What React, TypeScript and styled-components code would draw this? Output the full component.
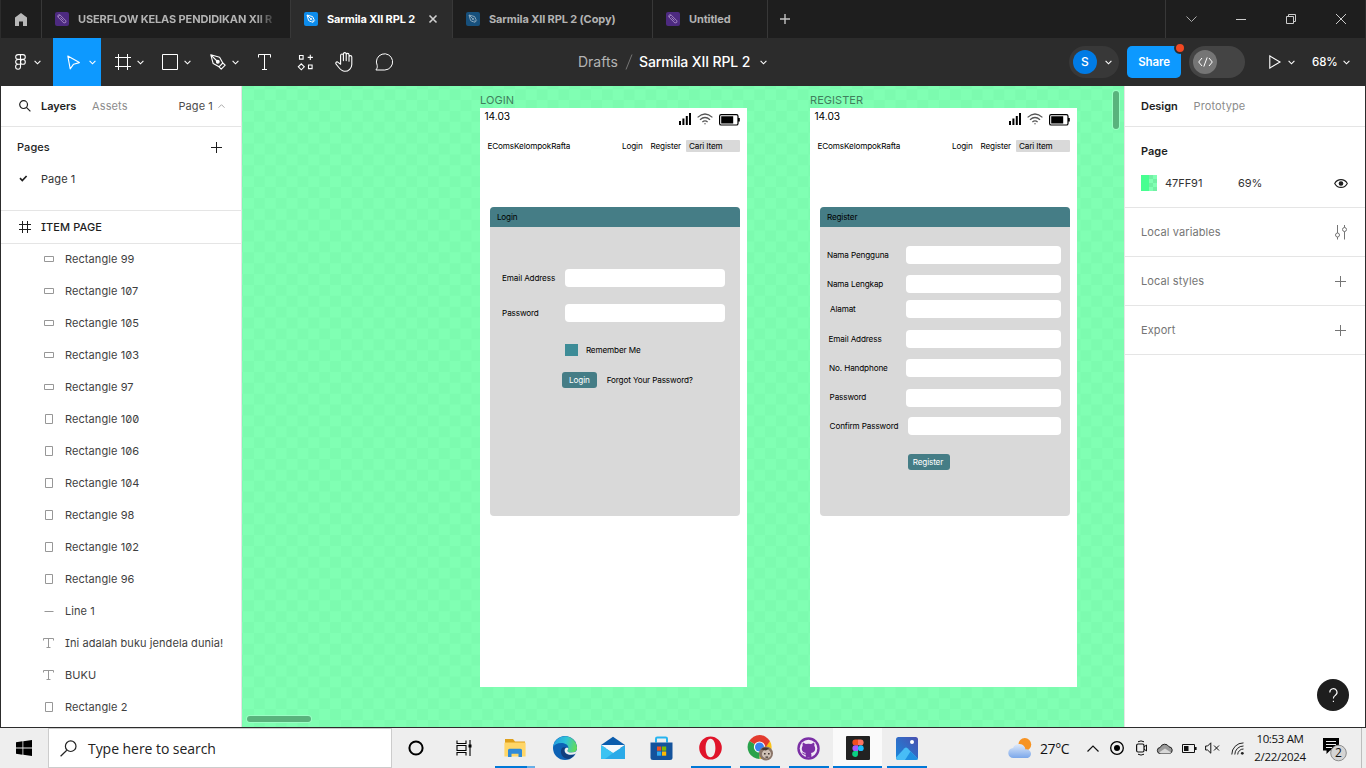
import React from 'react';
import styled, { createGlobalStyle } from 'styled-components';

const Global = createGlobalStyle`
  * { box-sizing: border-box; }
  html, body { margin: 0; padding: 0; overflow: hidden; }
  body { font-family: Inter, "Liberation Sans", sans-serif; font-size: 11px; color: #333; }
  svg { display: block; flex: none; overflow: visible; }
`;

const Screen = styled.div`
  width: 1366px; height: 768px; display: flex; flex-direction: column; overflow: hidden; background: #fff;
`;
const Window = styled.div`
  height: 728px; display: flex; flex-direction: column; border: 1px solid #2c2c2c; border-top: 0;
`;

/* ---------- tab bar ---------- */
const TabBar = styled.div`
  height: 38px; flex: none; display: flex; background: #1e1e1e;
`;
const HomeTab = styled.div`
  width: 41px; display: flex; align-items: center; justify-content: center; border-right: 1px solid #383838;
`;
const Tab = styled.div<{ $w: number; $active?: boolean }>`
  width: ${p => p.$w}px; height: 38px; display: flex; align-items: center; padding-left: 13px; gap: 9px;
  border-right: 1px solid #383838; background: ${p => (p.$active ? '#2c2c2c' : '#1e1e1e')};
  color: ${p => (p.$active ? '#fff' : '#b3b3b3')};
`;
const TabIcon = styled.span<{ $bg: string }>`
  width: 14px; height: 14px; border-radius: 2px; background: ${p => p.$bg}; flex: none;
  display: flex; align-items: center; justify-content: center;
`;
const TabTitle = styled.span<{ $w: number; $fade?: boolean }>`
  width: ${p => p.$w}px; flex: none; white-space: nowrap; font-size: 11px; font-weight: 700; line-height: 16px; letter-spacing: -0.12px;
  ${p => p.$fade && 'mask-image: linear-gradient(90deg, #000 91%, rgba(0,0,0,.15) 100%);'}
`;
const NewTab = styled.div`
  width: 34px; display: flex; align-items: center; justify-content: center;
`;
const WindowControls = styled.div`
  margin-left: auto; width: 200px; border-left: 1px solid #383838; display: flex; align-items: center;
`;
const WindowControl = styled.div`
  width: 50px; flex: none; display: flex; justify-content: center;
`;

/* ---------- toolbar ---------- */
const Toolbar = styled.div`
  height: 48px; flex: none; display: flex; align-items: center; background: #2c2c2c; color: #fff;
`;
const Tools = styled.div`
  width: 577px; height: 48px; display: flex;
`;
const Tool = styled.div<{ $w: number; $active?: boolean; $pad?: number; $gap?: number }>`
  width: ${p => p.$w}px; height: 48px; padding-left: ${p => p.$pad ?? 0}px; display: flex; align-items: center; gap: ${p => p.$gap ?? 0}px;
  background: ${p => (p.$active ? '#0d99ff' : 'transparent')};
`;
const DocTitle = styled.div`
  display: flex; align-items: center; font-size: 14px; line-height: 20px; white-space: nowrap;
`;
const Folder = styled.span`
  width: 45px; color: #b3b3b3;
`;
const Slash = styled.span`
  width: 16px; padding-left: 2px;
`;
const DocName = styled.span`
  width: 121px; font-weight: 500; letter-spacing: -0.12px;
`;
const Actions = styled.div`
  margin-left: auto; height: 48px; display: flex; align-items: center;
`;
const UserPill = styled.div`
  width: 50px; height: 32px; border-radius: 16px; background: #383838; display: flex; align-items: center; padding-left: 4px; gap: 8px;
`;
const Avatar = styled.div`
  width: 24px; height: 24px; border-radius: 12px; background: #007be5; font-size: 12px; line-height: 24px; font-weight: 500; text-align: center;
`;
const ShareButton = styled.div`
  position: relative; width: 54px; height: 32px; margin-left: 8px; border-radius: 5px; background: #0d99ff;
  font-size: 11.5px; font-weight: 600; line-height: 32px; text-align: center; letter-spacing: -0.1px;
`;
const NoticeDot = styled.span`
  position: absolute; right: -5px; top: -4px; width: 12px; height: 12px; border-radius: 6px; background: #f24822; border: 2px solid #2c2c2c;
`;
const DevToggle = styled.div`
  width: 56px; height: 32px; border-radius: 16px; background: #444; margin-left: 8px; padding: 4px;
`;
const DevKnob = styled.div`
  width: 24px; height: 24px; border-radius: 12px; background: #757575; display: flex; align-items: center; justify-content: center;
`;
const Present = styled.div`
  margin-left: 24px; width: 43px; display: flex; align-items: center; gap: 7px;
`;
const Zoom = styled.div`
  width: 53px; display: flex; align-items: center; gap: 5px; font-size: 11.5px; font-weight: 500; letter-spacing: -0.1px;
`;

/* ---------- body ---------- */
const Body = styled.div`
  height: 641px; display: flex; overflow: hidden;
`;
const LeftPanel = styled.div`
  width: 241px; flex: none; background: #fff; border-right: 1px solid #e5e5e5; overflow: hidden; letter-spacing: 0.08px;
  font-feature-settings: "zero", "cv08";
`;
const PanelTabs = styled.div`
  height: 41px; display: flex; align-items: center; border-bottom: 1px solid #e5e5e5;
`;
const PanelTab = styled.span<{ $w: number; $active?: boolean }>`
  width: ${p => p.$w}px; white-space: nowrap; font-weight: ${p => (p.$active ? 600 : 400)}; color: ${p => (p.$active ? '#1e1e1e' : '#8c8c8c')};
  letter-spacing: ${p => (p.$active ? -0.05 : 0.12)}px;
`;
const PageSwitch = styled.span`
  display: flex; align-items: center; gap: 5px; color: #4c4c4c;
`;
const PagesHeader = styled.div`
  height: 36px; padding: 4px 19px 0 16px; display: flex; align-items: center; justify-content: space-between; font-weight: 500; color: #1e1e1e;
`;
const PagesTitle = styled.span`
  line-height: 14px; padding-bottom: 1px;
`;
const PageItem = styled.div`
  height: 48px; padding: 0 0 16px 18px; display: flex; align-items: center; gap: 13px; border-bottom: 1px solid #e5e5e5;
`;
const FrameItem = styled.div`
  height: 33px; padding-left: 18px; display: flex; align-items: center; gap: 10px; border-bottom: 1px solid #e5e5e5; font-weight: 450; color: #1e1e1e;
`;
const LayerList = styled.div`
  margin-top: -1px;
`;
const LayerItem = styled.div`
  height: 32px; padding-left: 42px; display: flex; align-items: center; gap: 10px; white-space: nowrap; color: #3f3f3f;
`;
const LayerIcon = styled.span`
  width: 12px; height: 12px; display: flex; align-items: center; justify-content: center; color: #979797;
`;

/* ---------- canvas ---------- */
const Canvas = styled.div`
  position: relative; width: 882px; flex: none; overflow: hidden; background-color: #80ffb3;
  background-image: conic-gradient(#7cfbaf 25%, transparent 0 50%, #7cfbaf 0 75%, transparent 0);
  background-size: 21.76px 21.76px; background-position: 1.1px 3.2px;
`;
const Artboard = styled.div<{ $x: number }>`
  position: absolute; left: ${p => p.$x}px; top: 7px; width: 267px; color: #000;
`;
const ArtboardName = styled.div`
  height: 15px; font-size: 11px; line-height: 14px; color: #40805d; letter-spacing: 0.05px;
`;
const Phone = styled.div`
  height: 579px; background: #fff; overflow: hidden; font-size: 8.16px; line-height: 12px; white-space: nowrap; letter-spacing: -0.14px;
`;
const StatusBar = styled.div`
  height: 32px; display: flex; padding: 0 7px 0 4.5px;
`;
const Clock = styled.span`
  font-size: 10.2px; line-height: 17px; margin-right: auto; letter-spacing: -0.05px;
`;
const StatusIcons = styled.div`
  display: flex; gap: 6px; padding-top: 5px;
`;
const NavRow = styled.div`
  display: flex; height: 12px; padding: 0 7.5px;
`;
const Brand = styled.span`
  margin-right: auto;
`;
const NavLink = styled.span<{ $w: number }>`
  width: ${p => p.$w}px;
`;
const SearchBox = styled.span`
  width: 53.5px; height: 12px; border-radius: 1px; background: #d9d9d9; padding-left: 3px;
`;
const Card = styled.div`
  margin: 54.6px 0 0 9.6px; width: 250.6px; height: 309.5px; border-radius: 4px; background: #d9d9d9; overflow: hidden;
`;
const CardTitle = styled.div`
  height: 20.4px; background: #457d86; padding-left: 7.3px; line-height: 21px;
`;
const Field = styled.div<{ $mt: number; $pad: number; $label: number; $lift?: number }>`
  display: flex; height: 18px; margin-top: ${p => p.$mt}px; padding-left: ${p => p.$pad}px; line-height: ${p => 18 - (p.$lift ?? 0)}px;
  & > span { width: ${p => p.$label}px; }
`;
const Input = styled.div<{ $w: number }>`
  width: ${p => p.$w}px; height: 18px; border-radius: 4px; background: #fff;
`;
const RememberRow = styled.div`
  display: flex; align-items: center; gap: 7.5px; height: 12px; margin: 21.4px 0 0 75.2px;
`;
const CheckBox = styled.div`
  width: 13.6px; height: 12px; background: #3d8c97;
`;
const SubmitRow = styled.div<{ $mt: number; $ml: number }>`
  display: flex; align-items: center; gap: 9.6px; margin: ${p => p.$mt}px 0 0 ${p => p.$ml}px;
`;
const Button = styled.div<{ $w: number }>`
  width: ${p => p.$w}px; height: 16.3px; border-radius: 3px; background: #457d86; color: #fff; padding-left: ${p => (p.$w > 40 ? 4.8 : 7)}px; line-height: 16px;
`;
const ScrollThumb = styled.div<{ $x: number; $y: number; $w: number; $h: number }>`
  position: absolute; left: ${p => p.$x}px; top: ${p => p.$y}px; width: ${p => p.$w}px; height: ${p => p.$h}px; border-radius: 4px;
  background: #59b37d; box-shadow: 0 0 0 1px #9affc4;
`;

/* ---------- right panel ---------- */
const RightPanel = styled.div`
  flex: 1; position: relative; background: #fff; border-left: 1px solid #e5e5e5; letter-spacing: 0.1px;
`;
const Section = styled.div<{ $end?: number }>`
  height: 49px; padding: 0 ${p => p.$end ?? 19}px 0 16px; border-bottom: 1px solid #e5e5e5; display: flex; align-items: center; justify-content: space-between; color: #757575;
`;
const PageSection = styled.div`
  height: 81px; padding: 16px 17px 0 16px; border-bottom: 1px solid #e5e5e5;
`;
const SectionTitle = styled.div`
  height: 16px; line-height: 16px; font-weight: 600; color: #1e1e1e; letter-spacing: 0;
`;
const ColorRow = styled.div`
  margin-top: 16px; height: 16px; line-height: 16px; display: flex; align-items: center;
`;
const Swatch = styled.span`
  width: 16px; height: 16px; display: flex; background: #47ff91;
  &::after {
    content: ""; width: 8px; height: 16px; margin-left: auto;
    background: repeating-conic-gradient(#80ffb3 0 25%, #72f0a4 0 50%) 0 0 / 8px 8px;
  }
`;
const ColorValue = styled.span<{ $w: number }>`
  width: ${p => p.$w}px; height: 16px; padding-left: 8px; letter-spacing: -0.05px;
`;
const HelpButton = styled.div`
  position: absolute; right: 16px; bottom: 16px; width: 32px; height: 32px; border-radius: 16px; background: #1e1e1e; color: #fff;
  display: flex; align-items: center; justify-content: center;
`;

/* ---------- taskbar ---------- */
const Taskbar = styled.div`
  height: 40px; display: flex; background: #eeeeee; font-family: "Open Sans", "Noto Sans", sans-serif; color: #111;
`;
const StartButton = styled.div`
  width: 48px; display: flex; align-items: center; justify-content: center;
`;
const SearchField = styled.div`
  width: 344px; height: 40px; background: #fff; border: 1px solid #ccc; display: flex; align-items: center; padding-left: 11px; gap: 11px;
  font-size: 14px; letter-spacing: -0.05px; color: #222;
`;
const AppButton = styled.div<{ $w?: number; $active?: boolean }>`
  width: ${p => p.$w ?? 49}px; height: 40px; display: flex; flex-direction: column; align-items: center; justify-content: center; position: relative;
  background: ${p => (p.$active ? '#fafafa' : 'transparent')};
`;
const RunMark = styled.span<{ $full?: boolean; $stack?: boolean }>`
  position: absolute; bottom: 0; height: 2px; left: ${p => (p.$full ? 0 : 5)}px; right: ${p => (p.$full ? 0 : 4)}px;
  background: ${p => (p.$stack ? 'linear-gradient(90deg, #0078d7 80%, #66aee7 80%)' : '#0078d7')};
`;
const Tray = styled.div`
  margin-left: auto; display: flex; align-items: center;
`;
const Weather = styled.div`
  width: 73px; display: flex; align-items: center; gap: 7px; font-size: 14px; letter-spacing: -0.4px;
`;
const TrayIcon = styled.span<{ $w?: number }>`
  width: ${p => p.$w ?? 24}px; display: flex; justify-content: center;
`;
const DateTime = styled.div`
  width: 58px; text-align: center; font-size: 11.5px; line-height: 18px; letter-spacing: -0.35px; white-space: nowrap;
`;
const Notices = styled.div`
  width: 53px; height: 40px; margin-right: 4px; display: flex; justify-content: center; align-items: center; border-right: 1px solid #bdbdbd;
`;

const Chevron = ({ c = '#fff' }: { c?: string }) => (
  <svg width="7" height="5" viewBox="0 0 7 5" fill="none" stroke={c} strokeWidth="1.1"><path d="M.6.9 3.5 3.8 6.4.9" /></svg>
);
const Plus = ({ s = 11, c = '#1e1e1e' }: { s?: number; c?: string }) => (
  <svg width={s} height={s} viewBox={`0 0 ${s} ${s}`} stroke={c}><path d={`M${s / 2} 0V${s}M0 ${s / 2}H${s}`} /></svg>
);
const PenMark = ({ c }: { c: string }) => (
  <svg width="10" height="10" viewBox="0 0 10 10" fill="none" stroke={c} strokeWidth="1">
    <path d="M1 1 6.6 2.6 8 5.6 5.6 8 2.6 6.6ZM1 1 4.7 4.7M6.4 8.8 8.8 6.4" /><circle cx="5" cy="5" r=".8" />
  </svg>
);
const PencilMark = () => (
  <svg width="10" height="10" viewBox="0 0 10 10" fill="none" stroke="#a78bc4" strokeWidth=".9">
    <path d="M.9 3V1.5Q.9.9 1.5.9H3L9 6.9Q9.5 8.900 6.900 9ZM.9 3 3 .9M3.400 3.400 6.500 6.500" />
  </svg>
);

const layers: [string, string][] = [
  ['wide', 'Rectangle 99'], ['wide', 'Rectangle 107'], ['wide', 'Rectangle 105'], ['wide', 'Rectangle 103'], ['wide', 'Rectangle 97'],
  ['tall', 'Rectangle 100'], ['tall', 'Rectangle 106'], ['tall', 'Rectangle 104'], ['tall', 'Rectangle 98'], ['tall', 'Rectangle 102'],
  ['tall', 'Rectangle 96'], ['line', 'Line 1'], ['text', 'Ini adalah buku jendela dunia!'], ['text', 'BUKU'], ['tall', 'Rectangle 2'],
];
const layerPaths: Record<string, string> = {
  wide: 'M1.5 3.5h9v5h-9z', tall: 'M2.5 1.5h7v9h-7z', line: 'M1.5 6.5h9', text: 'M.5 3.5v-2h10v2M5.5 1.5v9M3.5 10.5h4',
};

const fields: { label: string; mt: number; pad: number; labelW: number; w: number; lift?: number }[] = [
  { label: 'Nama Pengguna', mt: 19, pad: 7.3, labelW: 79, w: 155 },
  { label: 'Nama Lengkap', mt: 10.6, pad: 7.3, labelW: 79, w: 155 },
  { label: 'Alamat', mt: 7.4, pad: 10.3, labelW: 76, w: 155 },
  { label: 'Email Address', mt: 12, pad: 9, labelW: 77.3, w: 155 },
  { label: 'No. Handphone', mt: 11.4, pad: 9.5, labelW: 76.8, w: 155 },
  { label: 'Password', mt: 11.2, pad: 10, labelW: 76.3, w: 155, lift: 2 },
  { label: 'Confirm Password', mt: 10.2, pad: 10, labelW: 78.3, w: 153 },
];

const PhoneHeader = () => (
  <>
    <StatusBar>
      <Clock>14.03</Clock>
      <StatusIcons>
        <svg width="12" height="12" viewBox="0 0 12 12"><path d="M0 8h2v4H0zM3.4 5.4h2V12h-2zM6.8 3h2v9h-2zM10 0h2v12h-2z" /></svg>
        <svg width="16" height="12" viewBox="0 0 16 12" fill="none" stroke="#555" strokeWidth="1.2">
          <path d="M.6 4.4Q8-2.4 15.4 4.4M3 6.8Q8 2.2 13 6.8M5.4 9Q8 6.6 10.6 9" /><circle cx="8" cy="10.8" r=".7" fill="#555" stroke="none" />
        </svg>
        <svg width="21" height="12" viewBox="0 0 21 12"><rect x=".6" y="1.6" width="18.4" height="10.4" rx="1.6" fill="none" stroke="#000" strokeWidth="1.2" /><path d="M2.2 3.2h12v7.4h-12zM19 5h1.800v3.600H19z" /></svg>
      </StatusIcons>
    </StatusBar>
    <NavRow>
      <Brand>EComsKelompokRafta</Brand>
      <NavLink $w={28.5}>Login</NavLink>
      <NavLink $w={35.5}>Register</NavLink>
      <SearchBox>Cari Item</SearchBox>
    </NavRow>
  </>
);

export default function App() {
  return (
    <Screen>
      <Global />
      <Window>
        <TabBar>
          <HomeTab>
            <svg width="12" height="13" viewBox="0 0 12 13" fill="#b8b8b8"><path d="M6 0 12 4.6V13H8V8.6H4V13H0V4.6Z" /></svg>
          </HomeTab>
          <Tab $w={249}><TabIcon $bg="#4d2a80"><PencilMark /></TabIcon><TabTitle $w={196} $fade>USERFLOW KELAS PENDIDIKAN XII R</TabTitle></Tab>
          <Tab $w={162} $active>
            <TabIcon $bg="#0d8cec"><PenMark c="#fff" /></TabIcon><TabTitle $w={93}>Sarmila XII RPL 2</TabTitle>
            <svg width="8" height="8" viewBox="0 0 8 8" stroke="#d0d0d0" strokeWidth="1.6"><path d="m.5.5 7 7m0-7-7 7" /></svg>
          </Tab>
          <Tab $w={200}><TabIcon $bg="#17507c"><PenMark c="#8ca8bc" /></TabIcon><TabTitle $w={150}>Sarmila XII RPL 2 (Copy)</TabTitle></Tab>
          <Tab $w={115}><TabIcon $bg="#4d2a80"><PencilMark /></TabIcon><TabTitle $w={60}>Untitled</TabTitle></Tab>
          <NewTab><svg width="10" height="10" viewBox="0 0 10 10" stroke="#c4c4c4" strokeWidth="1.4"><path d="M5 0v10M0 5h10" /></svg></NewTab>
          <WindowControls>
            <WindowControl><svg width="11" height="6" viewBox="0 0 11 6" fill="none" stroke="#aaa"><path d="m.5.5 5 5 5-5" /></svg></WindowControl>
            <WindowControl><svg width="10" height="1" viewBox="0 0 10 1"><path d="M0 0h10v1H0z" fill="#ccc" /></svg></WindowControl>
            <WindowControl><svg width="10" height="10" viewBox="0 0 10 10" fill="none" stroke="#ccc"><path d="M.5 2.5h7v7h-7zM2.5 2.5v-2h7v7h-2" /></svg></WindowControl>
            <WindowControl><svg width="10" height="10" viewBox="0 0 10 10" stroke="#ccc"><path d="m0 0 10 10M10 0 0 10" /></svg></WindowControl>
          </WindowControls>
        </TabBar>

        <Toolbar>
          <Tools>
            <Tool $w={52} $pad={14} $gap={8}>
              <svg width="11" height="16" viewBox="0 0 11 16" fill="none" stroke="#fff" strokeWidth="1.1">
                <path d="M5.5.6v12.2a2.45 2.45 0 1 1-2.4-2.5h2.4M3.1.6h4.8a2.4 2.4 0 0 1 0 4.8H3.1a2.4 2.4 0 0 1 0-4.8ZM5.5 5.4H3.1a2.45 2.45 0 0 0 0 4.9" /><circle cx="7.9" cy="7.9" r="2.4" />
              </svg>
              <Chevron />
            </Tool>
            <Tool $w={48} $active $pad={14} $gap={9}>
              <svg width="13" height="15" viewBox="0 0 13 15" fill="none" stroke="#fff" strokeWidth="1.1" strokeLinejoin="round"><path d="M.8 1 12.4 7.6 6.6 9.2 3.2 13.8Z" /></svg>
              <Chevron />
            </Tool>
            <Tool $w={48} $pad={14} $gap={6}>
              <svg width="16" height="16" viewBox="0 0 16 16" stroke="#fff"><path d="M3.5 0v16M12.5 0v16M0 3.5h16M0 12.5h16" /></svg>
              <Chevron />
            </Tool>
            <Tool $w={48} $pad={13} $gap={6}>
              <svg width="16" height="16" viewBox="0 0 16 16" stroke="#fff" fill="none"><path d="M.5.5h15v15H.5z" /></svg>
              <Chevron />
            </Tool>
            <Tool $w={48} $pad={13} $gap={6}>
              <svg width="16" height="16" viewBox="0 0 16 16" stroke="#fff" fill="none" strokeWidth="1.1" strokeLinejoin="round">
                <path d="M.8.8 9.6 3.2 12.8 9 9 12.8 3.2 9.6ZM.8.8 7 7M12.8 9l2.4 2.2-4 4L9 12.8" /><circle cx="7.8" cy="7.8" r="1.4" fill="#fff" />
              </svg>
              <Chevron />
            </Tool>
            <Tool $w={40} $pad={13}>
              <svg width="14" height="16" viewBox="0 0 14 16" stroke="#fff" fill="none"><path d="M.5 3.5v-3h12v3M6.5.5v15M4 15.5h5" /></svg>
            </Tool>
            <Tool $w={40} $pad={13}>
              <svg width="15" height="15" viewBox="0 0 15 15" stroke="#fff" fill="none" strokeWidth="1.1"><path d="M1.5.5h3.6v3.6H1.5zM10.5 10h3.6v3.6h-3.6zM12.3-.2v5.2M9.7 2.4h5.2M3.3 8.800l3 3-3 3-3-3z" /></svg>
            </Tool>
            <Tool $w={40} $pad={10}>
              <svg width="18" height="20" viewBox="0 0 18 20" stroke="#fff" fill="none" strokeWidth="1.1" strokeLinecap="round" strokeLinejoin="round">
                <path d="M5.6 10V3.4a1.4 1.4 0 0 1 2.8 0V8.6M8.4 8.6V2a1.4 1.4 0 0 1 2.8 0v6.6M11.2 8.6V2.8a1.4 1.4 0 0 1 2.8 0v6.4M14 9V5a1.4 1.4 0 0 1 2.8 0v7.4a7 7 0 0 1-7 6.9c-4.2 0-5.4-3.4-8.7-7.2a1.3 1.3 0 0 1 1.6-2l2.9 2.1V9.4" />
              </svg>
            </Tool>
            <Tool $w={40} $pad={10}>
              <svg width="18" height="17" viewBox="0 0 18 17" stroke="#fff" fill="none" strokeWidth="1"><path d="M.9 16c1.3-1.6 1.6-2.6 1.3-4.6A8.1 8.1 0 1 1 9.8 16Z" /></svg>
            </Tool>
          </Tools>
          <DocTitle>
            <Folder>Drafts</Folder>
            <Slash><svg width="8" height="16" viewBox="0 0 8 16" stroke="#757575"><path d="M1 15.5 7 .5" /></svg></Slash>
            <DocName>Sarmila XII RPL 2</DocName>
            <Chevron />
          </DocTitle>
          <Actions>
            <UserPill><Avatar>S</Avatar><Chevron /></UserPill>
            <ShareButton>Share<NoticeDot /></ShareButton>
            <DevToggle><DevKnob>
              <svg width="15" height="10" viewBox="0 0 15 10" stroke="#fff" fill="none"><path d="M4 1 .7 5 4 9M11 1l3.3 4L11 9M9.2.4 5.8 9.6" /></svg>
            </DevKnob></DevToggle>
            <Present>
              <svg width="12" height="14" viewBox="0 0 12 14" stroke="#fff" fill="none" strokeWidth="1.1"><path d="M.8.9v12.2L11 7Z" /></svg>
              <Chevron />
            </Present>
            <Zoom>68%<Chevron /></Zoom>
          </Actions>
        </Toolbar>

        <Body>
          <LeftPanel>
            <PanelTabs>
              <PanelTab $w={40}>
                <svg style={{ marginLeft: 18 }} width="12" height="12" viewBox="0 0 12 12" fill="none" stroke="#1e1e1e" strokeWidth="1.2"><circle cx="4.6" cy="4.6" r="3.9" /><path d="m7.4 7.4 4 4" /></svg>
              </PanelTab>
              <PanelTab $w={51} $active>Layers</PanelTab>
              <PanelTab $w={86.5}>Assets</PanelTab>
              <PageSwitch>Page 1<svg width="7" height="4" viewBox="0 0 7 4" fill="none" stroke="#aaa"><path d="M.5 3.7 3.5.7l3 3" /></svg></PageSwitch>
            </PanelTabs>
            <PagesHeader><PagesTitle>Pages</PagesTitle><Plus /></PagesHeader>
            <PageItem>
              <svg width="9" height="7" viewBox="0 0 9 7" fill="none" stroke="#1e1e1e" strokeWidth="1.7"><path d="m1 3.2 2.3 2.3L7.6 1" /></svg>
              Page 1
            </PageItem>
            <FrameItem>
              <svg width="12" height="12" viewBox="0 0 12 12" stroke="#1e1e1e"><path d="M3.5 0v12M8.5 0v12M0 3.5h12M0 8.5h12" /></svg>
              ITEM PAGE
            </FrameItem>
            <LayerList>
              {layers.map(([kind, name]) => (
                <LayerItem key={name}>
                  <LayerIcon><svg width="12" height="12" viewBox="0 0 12 12" stroke="currentColor" fill="none"><path d={layerPaths[kind]} /></svg></LayerIcon>
                  {name}
                </LayerItem>
              ))}
            </LayerList>
          </LeftPanel>

          <Canvas>
            <Artboard $x={238}>
              <ArtboardName>LOGIN</ArtboardName>
              <Phone>
                <PhoneHeader />
                <Card>
                  <CardTitle>Login</CardTitle>
                  <Field $mt={42} $pad={12.5} $label={62.7}><span>Email Address</span><Input $w={160.5} /></Field>
                  <Field $mt={17.4} $pad={12.5} $label={62.7}><span>Password</span><Input $w={160.5} /></Field>
                  <RememberRow><CheckBox />Remember Me</RememberRow>
                  <SubmitRow $mt={16} $ml={72.5}><Button $w={35}>Login</Button>Forgot Your Password?</SubmitRow>
                </Card>
              </Phone>
            </Artboard>
            <Artboard $x={568}>
              <ArtboardName>REGISTER</ArtboardName>
              <Phone>
                <PhoneHeader />
                <Card>
                  <CardTitle>Register</CardTitle>
                  {fields.map(f => (
                    <Field key={f.label} $mt={f.mt} $pad={f.pad} $label={f.labelW} $lift={f.lift}><span>{f.label}</span><Input $w={f.w} /></Field>
                  ))}
                  <SubmitRow $mt={19} $ml={88.3}><Button $w={42}>Register</Button></SubmitRow>
                </Card>
              </Phone>
            </Artboard>
            <ScrollThumb $x={871} $y={5} $w={6} $h={38} />
            <ScrollThumb $x={5} $y={630} $w={64} $h={6} />
          </Canvas>

          <RightPanel>
            <PanelTabs>
              <PanelTab $w={16} />
              <PanelTab $w={52.5} $active>Design</PanelTab>
              <PanelTab $w={80}>Prototype</PanelTab>
            </PanelTabs>
            <PageSection>
              <SectionTitle>Page</SectionTitle>
              <ColorRow>
                <Swatch /><ColorValue $w={73}>47FF91</ColorValue><ColorValue $w={104}>69%</ColorValue>
                <svg width="14" height="9" viewBox="0 0 14 9" fill="none" stroke="#1e1e1e" strokeWidth="1.1"><path d="M.7 4.5C3.4-.7 10.6-.7 13.3 4.5 10.6 9.7 3.4 9.7.7 4.5Z" /><circle cx="7" cy="4.5" r="1.8" fill="#1e1e1e" /></svg>
              </ColorRow>
            </PageSection>
            <Section $end={18}>Local variables
              <svg width="12" height="15" viewBox="0 0 12 15" fill="none" stroke="#757575"><path d="M2.5 0v8M2.5 12v2.5M9.5 0v2.5M9.5 6.5v8" /><circle cx="2.5" cy="10" r="2" /><circle cx="9.5" cy="4.5" r="2" /></svg>
            </Section>
            <Section>Local styles<Plus c="#757575" /></Section>
            <Section>Export<Plus c="#757575" /></Section>
            <HelpButton>
              <svg width="9" height="15" viewBox="0 0 9 15" fill="none" stroke="#fff" strokeWidth="1.1"><path d="M.8 4.4a3.6 3.6 0 1 1 5.4 3C4.9 8.2 4.4 8.8 4.4 10.500M4.400 12.700v1.400" /></svg>
            </HelpButton>
          </RightPanel>
        </Body>
      </Window>

      <Taskbar>
        <StartButton>
          <svg width="16" height="16" viewBox="0 0 16 16"><path d="M0 2.2 6.5 1.3V7.6H0zM7.3 1.2 16 0V7.6H7.3zM0 8.4H6.5V14.7L0 13.8zM7.3 8.4H16V16L7.3 14.8z" /></svg>
        </StartButton>
        <SearchField>
          <svg width="17" height="17" viewBox="0 0 17 17" fill="none" stroke="#222" strokeWidth="1.2"><circle cx="10.7" cy="6.2" r="5.3" /><path d="M6.8 10.2.6 16.3" /></svg>
          Type here to search
        </SearchField>
        <AppButton $w={48}>
          <svg width="16" height="16" viewBox="0 0 16 16" fill="none" stroke="#000" strokeWidth="2"><circle cx="8" cy="8" r="6.6" /></svg>
        </AppButton>
        <AppButton $w={48}>
          <svg width="17" height="16" viewBox="0 0 17 16" fill="none" stroke="#000" strokeWidth="1.1"><path d="M1 .5v3h9v-3M1 5.5h9v5H1zM1 15.5v-3h9v3M14 0v16" /><path d="M12.5 4.5h3v3h-3z" fill="#000" stroke="none" /></svg>
        </AppButton>
        <AppButton $w={53}>
          <svg width="22" height="20" viewBox="0 0 22 20"><path d="M1 1h8l2 2.5h10V6H1z" fill="#dfa01c" /><path d="M1 4.5h20a.6.6 0 0 1 .6.6V18.5H.4V5.1A.6.6 0 0 1 1 4.5Z" fill="#ffd667" /><path d="M4 12.3a1.5 1.5 0 0 1 1.5-1.5h11a1.5 1.5 0 0 1 1.5 1.5V19H14.500v-3.200H7.500V19H4z" fill="#2f8ad8" /></svg>
          <RunMark $stack style={{ left: 7, right: 6 }} />
        </AppButton>
        <AppButton $w={47}>
          <svg width="24" height="24" viewBox="0 0 24 24">
            <defs>
              <linearGradient id="edgeTop" x1="0" x2="1" y1=".3" y2=".5"><stop offset="0" stopColor="#239be0" /><stop offset=".5" stopColor="#2fc3d8" /><stop offset="1" stopColor="#63db5b" /></linearGradient>
            </defs>
            <circle cx="12" cy="12" r="12" fill="#0d62b5" />
            <path d="M.1 11A12 12 0 0 1 24 11.5c.2 3-2 5-5.2 5-3.3 0-4.4-1-4.4-1.8 0-.7 1-1.1 1-2.9C15.4 8.6 11.6 7 8.3 7 3.9 7 1.2 9 .1 11Z" fill="url(#edgeTop)" />
            <path d="M8.8 12.2c-2.8 5 1.2 10.7 7 10.7 2.8-.9 4.8-2.5 6.3-4.8-4.8 2.2-9.6.6-10.4-2.3-.3-1.3.5-3.2 1.8-3.7-1.6-1-3.7-1.2-4.7.1Z" fill="#123f7e" />
            <path d="M11.7 13.5c-.8 4.5 5.4 6.6 10.6 4.5L24 16v-2c-1 1.8-2.7 2.500-5.200 2.500-3.300 0-4.600-1-4.400-1.800.5-1 1-1.500.8-2.600-1.500-.6-3.200 0-3.500 1.400Z" fill="#eeeeee" />
          </svg>
        </AppButton>
        <AppButton>
          <svg width="24" height="24" viewBox="0 0 24 24"><path d="M0 9 12 .8 24 9v3H0z" fill="#0a5cad" /><path d="M0 9v14h24V9L12 17z" fill="#2aaae8" /><path d="M0 9 12 17 4 23H0z" fill="#3cc3f2" /><path d="M0 9h24l-12 7.5z" fill="#f4f8fc" /></svg>
        </AppButton>
        <AppButton>
          <svg width="23" height="24" viewBox="0 0 23 24"><path d="M6 6.5V2.8A1.3 1.3 0 0 1 7.3 1.5h8.400A1.300 1.300 0 0 1 17 2.800v3.700" fill="none" stroke="#27b4ef" strokeWidth="2" /><path d="M.5 6.5h22v15A2.5 2.5 0 0 1 20 24H3a2.5 2.5 0 0 1-2.5-2.5z" fill="#14539c" /><path d="M7 10.5h4.2v4.2H7z" fill="#f25022" /><path d="M12 10.5h4.2v4.2H12z" fill="#7fba00" /><path d="M7 15.5h4.2v4.2H7z" fill="#2fa8ee" /><path d="M12 15.5h4.2v4.2H12z" fill="#ffb900" /></svg>
        </AppButton>
        <AppButton>
          <svg width="23" height="24" viewBox="0 0 23 24"><path fillRule="evenodd" d="M11.5.5a11.3 11.5 0 1 0 0 23 11.3 11.5 0 0 0 0-23Zm0 2.2c3 0 4.9 4 4.9 9.3s-1.9 9.3-4.9 9.3-4.9-4-4.9-9.3 1.9-9.3 4.9-9.3Z" fill="#e0142a" /></svg>
          <RunMark />
        </AppButton>
        <AppButton>
          <svg width="25" height="26" viewBox="0 0 25 26">
            <path d="M12.5 12 2.2 6A12 12 0 0 1 22.9 6Z" fill="#e33b2e" /><path d="M12.5 12 22.9 6a12 12 0 0 1-10.4 18Z" fill="#fbc116" /><path d="M12.5 12v12A12 12 0 0 1 2.2 6Z" fill="#29a24b" />
            <path d="M12.5 6h10.4l-4 6z" fill="#e33b2e" /><circle cx="12.5" cy="12" r="5.6" fill="#fff" /><circle cx="12.5" cy="12" r="4.5" fill="#3b82f0" />
            <circle cx="19" cy="18.5" r="7" fill="#8a7568" /><ellipse cx="19.5" cy="19" rx="4.6" ry="4.4" fill="#cfc0b4" /><path d="M14 14.5q3-3.5 8-1l-3 2zM17 18h1.6v1.6H17zM21 18h1.6v1.6H21zM18.5 21.5h2.600v1.200h-2.600z" fill="#423630" />
          </svg>
          <RunMark />
        </AppButton>
        <AppButton>
          <svg width="23" height="23" viewBox="0 0 23 23"><circle cx="11.5" cy="11.5" r="11.2" fill="#7b2fa5" /><circle cx="11.5" cy="11.5" r="8.8" fill="#f1e9f6" /><path d="M6 5.5 8.8 7q2.7-.6 5.4 0L17 5.5q.8 1.7.3 3.2c2.2 3.7.3 7-3.4 7.3.6.7.5 1.4.5 4H8.7v-2.2c-2.4.4-2.9-1.4-4-2.2 1.7-.2 2 1.5 4 1 0-.3.2-.6.5-.7C5.3 15.5 3.6 12.3 5.7 8.7Q5.2 7.2 6 5.500Z" fill="#7b2fa5" /></svg>
          <RunMark />
        </AppButton>
        <AppButton $active>
          <svg width="24" height="24" viewBox="0 0 24 24"><rect width="24" height="24" rx="1" fill="#222" /><path d="M12 3.5H9.3a2.9 2.9 0 0 0 0 5.8H12z" fill="#f24e1e" /><path d="M12 3.5h2.7a2.9 2.9 0 0 1 0 5.8H12z" fill="#ff7262" /><path d="M12 9.3H9.3a2.9 2.9 0 0 0 0 5.8H12z" fill="#a259ff" /><circle cx="14.8" cy="12.2" r="2.9" fill="#1abcfe" /><path d="M12 15.1H9.3a2.9 2.9 0 1 0 2.7 2.9z" fill="#0acf83" /></svg>
          <RunMark $full />
        </AppButton>
        <AppButton>
          <svg width="22" height="23" viewBox="0 0 22 23"><defs><linearGradient id="photoBg" x1="0" x2="1" y1="1" y2="0"><stop offset="0" stopColor="#1888dc" /><stop offset="1" stopColor="#4a50b0" /></linearGradient><clipPath id="photoClip"><rect width="22" height="23" rx="2.5" /></clipPath></defs><g clipPath="url(#photoClip)"><rect width="22" height="23" fill="url(#photoBg)" /><path d="M0 20.500 8.500 11.200Q10 9.700 11.500 11.200L22 22v1H0z" fill="#48bdf6" /><path d="M9 23 14.5 14.5 22 22v1z" fill="#1f8fe0" /><circle cx="16" cy="5" r="2" fill="#fff" /></g></svg>
          <RunMark />
        </AppButton>
        <Tray>
          <Weather>
            <svg width="25" height="21" viewBox="0 0 25 21"><defs><linearGradient id="cloud" x1="0" x2="0" y1="0" y2="1"><stop offset="0" stopColor="#dfeafa" /><stop offset="1" stopColor="#7ba7ea" /></linearGradient></defs><circle cx="16.8" cy="6.5" r="6.4" fill="#f79322" /><path d="M5.5 20a5 5 0 0 1-.4-10 6.5 6.5 0 0 1 12.4 1.500 4.300 4.300 0 0 1 2.200 8.500Z" fill="url(#cloud)" /></svg>
            27°C
          </Weather>
          <TrayIcon><svg width="12" height="7" viewBox="0 0 12 7" fill="none" stroke="#111" strokeWidth="1.2"><path d="M.5 6.5 6 1l5.5 5.5" /></svg></TrayIcon>
          <TrayIcon><svg width="14" height="14" viewBox="0 0 14 14" fill="none" stroke="#000" strokeWidth="1.3"><circle cx="7" cy="7" r="6.3" /><circle cx="7" cy="7" r="3" fill="#000" stroke="none" /></svg></TrayIcon>
          <TrayIcon><svg width="11" height="16" viewBox="0 0 11 16" fill="none" stroke="#111"><path d="M2 1.8Q5 0 8 1.8M2 14.2Q5 16 8 14.2" /><rect x=".6" y="4" width="7.4" height="8" rx="1.5" strokeWidth="1.2" /><path d="m8 7 2.5-2v6L8 9" /></svg></TrayIcon>
          <TrayIcon><svg width="16" height="11" viewBox="0 0 16 11"><path d="M3.5 10.5a3 3 0 0 1-.3-6 4.8 4.8 0 0 1 8.8-.7 3.4 3.4 0 0 1 .6 6.7Z" fill="#9a9a9a" stroke="#222" /><path d="M2 9.5 8 5.5l6 4q-1 1-2 1H4z" fill="#d8d8d8" /></svg></TrayIcon>
          <TrayIcon><svg width="15" height="9" viewBox="0 0 15 9"><path d="M.5.5h12v8H.5z" fill="none" stroke="#111" /><path d="M2 2h4.5v5H2zM13 3h1.6v3H13z" fill="#111" /></svg></TrayIcon>
          <TrayIcon $w={23}><svg width="15" height="12" viewBox="0 0 15 12" fill="none" stroke="#111"><path d="M.6 4h2L5.8.8v10.4L2.6 8h-2zM9 3.5l5 5m0-5-5 5" /></svg></TrayIcon>
          <TrayIcon $w={27}><svg width="13" height="13" viewBox="0 0 13 13" fill="none" stroke="#222"><path d="M.8 12.5A11.5 11.5 0 0 1 12.5.9M3.8 12.5A8.6 8.6 0 0 1 12.5 4M6.7 12.5a5.7 5.7 0 0 1 5.8-5.5" /><circle cx="11.3" cy="11.3" r="1.4" fill="#222" stroke="none" /></svg></TrayIcon>
          <DateTime><div>10:53 AM</div><div>2/22/2024</div></DateTime>
          <Notices>
            <svg width="24" height="24" viewBox="0 0 24 24"><path d="M0 2h16v12.5H7L3.5 18v-3.5H0z" fill="#000" /><path d="M3 5.5h10M3 8.5h10M3 11.5h6" stroke="#eee" /><circle cx="15.5" cy="17" r="7.8" fill="#d4d4d4" stroke="#8c8c8c" /><text x="15.5" y="21.3" fontSize="12" textAnchor="middle" fontFamily="Open Sans" fill="#111">2</text></svg>
          </Notices>
        </Tray>
      </Taskbar>
    </Screen>
  );
}
